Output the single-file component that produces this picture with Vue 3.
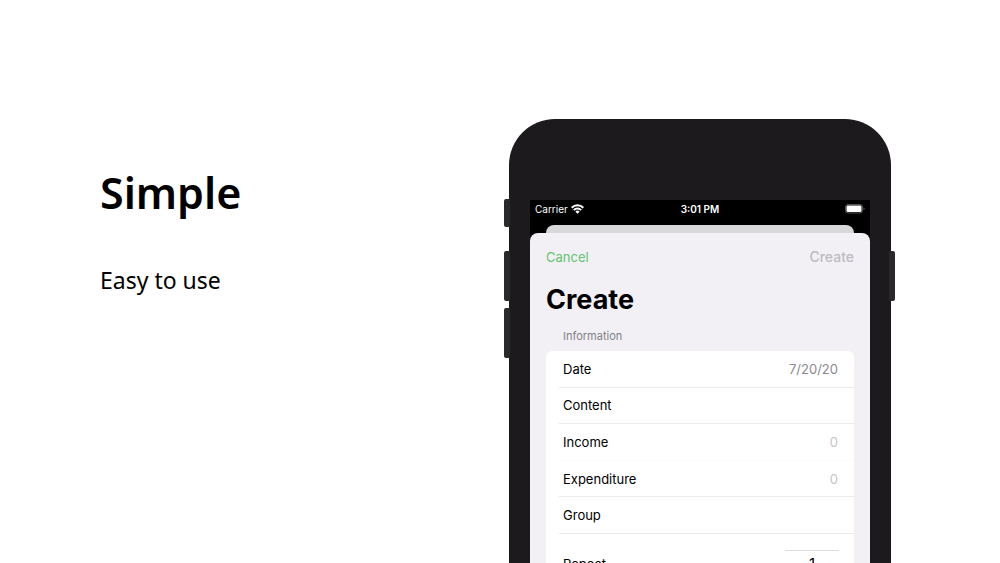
<script setup>
import { ref } from 'vue'

const fields = ref([
  { id: 'date', label: 'Date', value: '7/20/20', placeholder: '' },
  { id: 'content', label: 'Content', value: '', placeholder: '' },
  { id: 'income', label: 'Income', value: '', placeholder: '0' },
  { id: 'expenditure', label: 'Expenditure', value: '', placeholder: '0' },
  { id: 'group', label: 'Group', value: '', placeholder: '' },
])
const repeat = ref('1')
</script>

<template>
  <main class="page">
    <section class="intro">
      <h1>Simple</h1>
      <p>Easy to use</p>
    </section>

    <section class="phone">
      <span class="key mute"></span>
      <span class="key volume-up"></span>
      <span class="key volume-down"></span>
      <span class="key power"></span>

      <div class="screen">
        <div class="status">
          <span class="carrier">
            Carrier
            <svg class="wifi" viewBox="0 0 24 18" aria-hidden="true">
              <g fill="none" stroke="#fff" stroke-width="3.6">
                <path d="M1.2 6.6a15.4 15.4 0 0 1 21.6 0" />
                <path d="M5.2 11a9.6 9.6 0 0 1 13.6 0" />
              </g>
              <path d="M12 17.8l-3.9-3.9a5.5 5.5 0 0 1 7.8 0z" fill="#fff" />
            </svg>
          </span>
          <span class="time">3:01 PM</span>
          <svg class="battery" viewBox="0 0 40 20" aria-hidden="true">
            <rect x="1" y="1" width="34" height="17" rx="5" fill="none" stroke="#555" stroke-width="2" />
            <rect x="3" y="3" width="30" height="13" rx="2.5" fill="#fff" />
            <path d="M37 6.5c3 1 3 5 0 6z" fill="#555" />
          </svg>
        </div>
        <div class="back-sheet"></div>
        <form class="sheet" @submit.prevent>
          <div class="nav">
            <button type="button" class="cancel">Cancel</button>
            <button type="submit" class="create" disabled>Create</button>
          </div>
          <h2>Create</h2>
          <h3>Information</h3>
          <div class="card">
            <div class="rows">
              <div v-for="field in fields" :key="field.id" class="row" :class="field.id">
                <label :for="field.id">{{ field.label }}</label>
                <input :id="field.id" v-model="field.value" type="text" :placeholder="field.placeholder" />
              </div>
            </div>
            <div class="repeat">
              <label for="repeat">Repeat</label>
              <input id="repeat" v-model="repeat" type="text" inputmode="numeric" />
            </div>
          </div>
        </form>
      </div>
    </section>
  </main>
</template>

<style>
body {
  background: #fff;
}
</style>

<style scoped>
.page {
  display: flex;
  justify-content: space-between;
  height: 100vh;
  box-sizing: border-box;
  padding: 119px 109px 0 100px;
  overflow: hidden;
  color: #000;
}

.intro {
  padding-top: 40px;
  font-family: "Noto Sans", "Open Sans", sans-serif;
}

.intro h1 {
  margin: 0;
  font-size: 43px;
  line-height: 68px;
  font-weight: 600;
}

.intro p {
  margin: 36px 0 0;
  font-size: 23px;
  line-height: 34px;
}

.phone {
  position: relative;
  flex: 0 0 382px;
  min-width: 0;
  box-sizing: border-box;
  height: 760px;
  padding: 81px 21px 0;
  border-radius: 46px;
  background: #1c1a1d;
  font-family: Inter, "Liberation Sans", sans-serif;
}

.key {
  position: absolute;
  left: -5px;
  width: 6px;
  height: 50px;
  border-radius: 2px 0 0 2px;
  background: #29282b;
}

.mute {
  top: 80px;
  height: 28px;
}

.volume-up {
  top: 132px;
}

.volume-down {
  top: 189px;
}

.power {
  top: 132px;
  left: auto;
  right: -4px;
  border-radius: 0 2px 2px 0;
}

.screen {
  height: 600px;
  background: #000;
}

.status {
  display: grid;
  grid-template-columns: 1fr auto 1fr;
  align-items: center;
  height: 18px;
  margin-bottom: 7px;
  padding: 0 5px;
  color: #fff;
  font-size: 10px;
}

.carrier {
  display: flex;
  align-items: center;
  gap: 3px;
}

.wifi {
  width: 13px;
  height: 10px;
}

.time {
  font-weight: 600;
}

.battery {
  justify-self: end;
  width: 20px;
  height: 10px;
}

.back-sheet {
  height: 8px;
  margin: 0 16px;
  border-radius: 8px 8px 0 0;
  background: #d8d7da;
}

.sheet {
  height: 560px;
  padding: 14px 16px 0;
  border-radius: 8px 8px 0 0;
  background: #f2f0f5;
}

.nav {
  display: flex;
  justify-content: space-between;
}

.nav button {
  padding: 0;
  border: 0;
  background: none;
  font: 14px/20px Inter, "Liberation Sans", sans-serif;
}

.nav .cancel {
  color: #62c370;
  font-size: 13px;
}

.nav .create {
  color: #bdbbc0;
  font-weight: 500;
}

h2 {
  margin: 15px 0 0;
  font-size: 27px;
  line-height: 36px;
  font-weight: 700;
}

h3 {
  margin: 11px 0 0 17px;
  font-size: 11px;
  line-height: 14px;
  font-weight: 400;
  color: #828086;
}

.card {
  height: 300px;
  margin-top: 8px;
  padding-left: 13px;
  border-radius: 6px;
  background: #fff;
  font-size: 13px;
}

.rows {
  display: grid;
  grid-template-columns: minmax(0, 1fr);
  grid-template-rows: repeat(5, 1fr);
  height: 183px;
}

.row {
  display: flex;
  align-items: center;
  padding: 0 16px 0 4px;
  border-bottom: 1px solid #ebebed;
}

.row.income {
  border-bottom-color: #fcfbfc;
}

.row input {
  flex: 1;
  min-width: 0;
  padding: 0;
  border: 0;
  outline: 0;
  background: none;
  color: #8b898e;
  font: inherit;
  text-align: right;
}

.row input::placeholder {
  color: #c5c4c7;
  opacity: 1;
}

.repeat {
  display: flex;
  align-items: flex-start;
  justify-content: space-between;
  padding: 16px 15px 0 4px;
}

.repeat label {
  padding-top: 4px;
  line-height: 20px;
}

.repeat input {
  width: 54px;
  padding: 1px 0 0;
  border: 0;
  border-top: 1px solid #dedee0;
  outline: 0;
  background: none;
  color: #000;
  font: 15px/24px Inter, "Liberation Sans", sans-serif;
  text-align: center;
}
</style>
